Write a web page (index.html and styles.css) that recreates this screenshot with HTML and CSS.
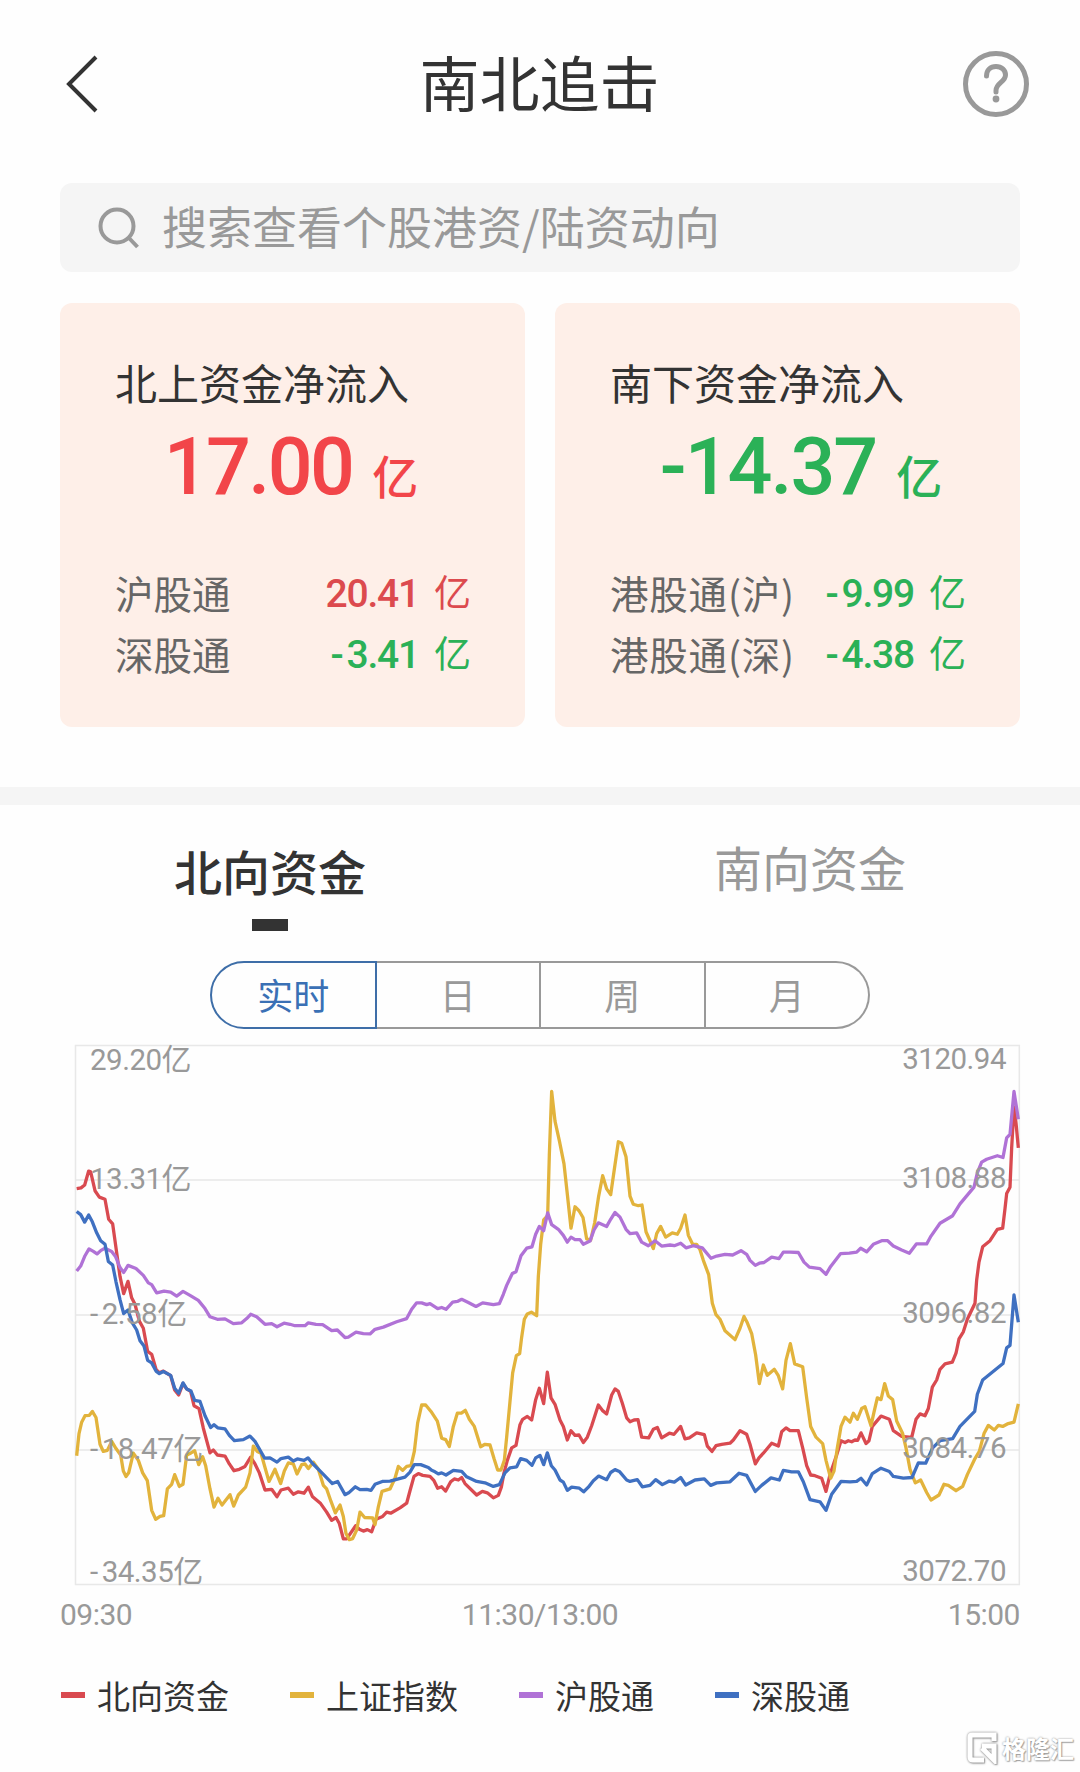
FILE: index.html
```html
<!DOCTYPE html>
<html lang="zh-CN">
  <head>
    <meta charset="UTF-8" />
    <meta name="viewport" content="width=device-width, initial-scale=1.0" />
    <title>南北追击</title>
    <link rel="stylesheet" href="styles.css">
  </head>
  <body>
    <header class="header">
      <svg class="back-icon" width="32" height="58" viewBox="0 0 32 58">
        <path d="M30 2 L3 29 L30 56" />
      </svg>
      <h1 class="title">南北追击</h1>
      <svg class="help-icon" width="66" height="66" viewBox="0 0 66 66">
        <circle cx="33" cy="33" r="30.500" />
        <path d="M23.500 25 C23.500 19 27.500 15.500 33 15.500 C38.500 15.500 42.500 19 42.500 24 C42.500 31 33 32 33 39.500 V41" />
        <circle class="help-dot" cx="33" cy="48" r="3.400" />
      </svg>
    </header>

    <div class="search">
      <svg class="search-icon" width="42" height="42" viewBox="0 0 42 42">
        <circle cx="19" cy="19" r="16.500" />
        <path d="M31 31 L39.500 40" />
      </svg>
      <span>搜索查看个股港资/陆资动向</span>
    </div>

    <section class="cards">
      <div class="card">
        <h2 class="card-title">北上资金净流入</h2>
        <div class="amount red">17.00<span class="unit">亿</span></div>
        <div class="row"><span>沪股通</span><span class="value red">20.41<span class="unit">亿</span></span></div>
        <div class="row"><span>深股通</span><span class="value green"><span class="minus">-</span>3.41<span class="unit">亿</span></span></div>
      </div>
      <div class="card south">
        <h2 class="card-title">南下资金净流入</h2>
        <div class="amount green">-14.37<span class="unit">亿</span></div>
        <div class="row"><span class="label">港股通(沪)</span><span class="value green"><span class="minus">-</span>9.99<span class="unit">亿</span></span></div>
        <div class="row"><span class="label">港股通(深)</span><span class="value green"><span class="minus">-</span>4.38<span class="unit">亿</span></span></div>
      </div>
    </section>

    <div class="divider"></div>

    <nav class="tabs">
      <div class="tab active">北向资金</div>
      <div class="tab">南向资金</div>
    </nav>

    <div class="segments">
      <div class="segment active">实时</div>
      <div class="segment">日</div>
      <div class="segment">周</div>
      <div class="segment">月</div>
    </div>

    <div class="chart">
      <svg class="plot" viewBox="45 42 2835 1512" preserveAspectRatio="none">
        <path class="grid" d="M45 420 H2878 M45 798 H2878 M45 1176 H2878" />
        <path class="grid" d="M46.500 43.400 H2878 V1552.600 H46.500 Z" />
        <polyline class="line north" points="50,444 63,442 74,434 86,395 92,397 105,450 118,468 135,474 146,530 158,543 168,610 180,690 191,738 204,704 215,750 225,768 238,815 250,835 263,900 275,908 288,950 298,960 310,955 332,968 344,1008 356,1022 369,990 380,1005 392,1012 402,1052 417,1060 430,1115 450,1184 460,1176 472,1190 495,1193 508,1215 522,1234 538,1230 555,1222 572,1196 585,1215 598,1240 615,1288 635,1286 651,1307 663,1288 685,1283 700,1300 715,1293 732,1297 745,1280 757,1306 782,1326 800,1350 815,1373 828,1365 838,1382 850,1425 860,1425 887,1388 898,1398 910,1403 922,1399 935,1405 948,1370 968,1362 980,1350 992,1353 1020,1338 1040,1325 1050,1290 1062,1250 1075,1242 1088,1247 1110,1250 1122,1262 1133,1283 1145,1279 1157,1291 1172,1265 1183,1257 1195,1260 1205,1253 1215,1270 1250,1302 1267,1292 1282,1296 1300,1310 1315,1303 1324,1280 1332,1240 1342,1205 1355,1170 1368,1163 1380,1105 1388,1090 1402,1082 1415,1092 1427,1035 1438,1003 1451,1046 1462,958 1473,1030 1485,1048 1500,1092 1510,1110 1522,1148 1533,1122 1545,1135 1557,1134 1570,1155 1582,1140 1595,1108 1615,1050 1627,1065 1640,1075 1655,1022 1665,1005 1675,1012 1687,1045 1700,1086 1710,1097 1722,1092 1734,1091 1745,1140 1766,1142 1780,1118 1792,1113 1805,1142 1828,1129 1842,1132 1862,1110 1875,1145 1888,1142 1910,1128 1933,1133 1942,1165 1956,1180 1968,1164 1985,1160 2010,1157 2020,1148 2040,1122 2060,1132 2070,1160 2086,1215 2097,1198 2110,1185 2135,1157 2155,1165 2165,1125 2178,1114 2190,1122 2215,1122 2228,1170 2240,1220 2252,1246 2265,1248 2285,1255 2298,1292 2310,1245 2330,1190 2343,1150 2355,1155 2365,1150 2375,1153 2385,1148 2393,1149 2403,1128 2418,1158 2427,1150 2437,1110 2463,1081 2488,1090 2500,1122 2525,1138 2555,1141 2568,1090 2580,1075 2595,1080 2605,1060 2617,1000 2630,980 2640,950 2655,935 2677,930 2688,905 2697,865 2710,845 2722,810 2745,765 2750,700 2757,650 2768,607 2790,590 2812,558 2828,555 2835,500 2840,458 2850,440 2855,330 2862,215 2868,260 2875,330" />
        <polyline class="line index" points="50,1192 57,1130 65,1098 75,1080 88,1079 97,1068 108,1085 120,1160 130,1180 142,1177 155,1152 168,1172 182,1190 190,1235 198,1250 206,1240 220,1185 235,1205 248,1240 262,1262 275,1345 287,1370 300,1362 311,1360 322,1285 335,1272 344,1245 358,1278 369,1272 380,1190 392,1185 404,1178 416,1217 428,1195 437,1220 450,1285 462,1336 474,1311 486,1330 510,1301 521,1333 535,1302 557,1280 570,1240 580,1165 592,1180 603,1185 615,1225 627,1264 645,1230 662,1270 673,1235 685,1212 700,1215 711,1243 725,1217 735,1215 745,1228 760,1210 775,1230 790,1275 800,1285 813,1320 826,1352 840,1330 850,1362 858,1410 868,1427 878,1424 890,1400 900,1350 914,1365 938,1366 945,1385 955,1335 966,1292 990,1285 1005,1255 1015,1222 1028,1233 1040,1222 1053,1220 1063,1180 1073,1100 1085,1050 1097,1050 1113,1068 1132,1095 1145,1143 1157,1147 1168,1166 1180,1110 1192,1073 1204,1073 1216,1065 1228,1090 1243,1110 1262,1167 1275,1160 1290,1162 1302,1200 1313,1232 1323,1232 1333,1205 1340,1140 1350,1040 1358,960 1369,912 1379,906 1385,860 1393,810 1402,795 1414,790 1430,800 1435,690 1442,600 1451,532 1463,520 1468,350 1475,172 1485,255 1498,310 1512,375 1522,460 1533,555 1545,495 1557,506 1569,525 1580,585 1592,588 1604,540 1616,465 1628,408 1640,445 1652,461 1663,390 1675,313 1685,317 1698,355 1710,465 1720,488 1735,492 1746,490 1758,565 1770,590 1780,612 1790,570 1802,550 1817,580 1837,568 1852,572 1862,555 1875,518 1885,575 1898,600 1910,600 1920,615 1930,645 1946,685 1957,765 1968,797 1980,810 1995,842 2025,867 2040,835 2052,802 2062,820 2075,850 2087,910 2098,990 2110,938 2122,967 2143,950 2155,968 2168,1005 2178,925 2191,878 2204,935 2228,943 2240,1030 2252,1110 2268,1140 2288,1158 2298,1205 2312,1255 2322,1235 2332,1170 2343,1110 2355,1084 2370,1098 2380,1073 2392,1090 2405,1060 2415,1055 2433,1108 2442,1070 2452,1030 2463,1035 2474,990 2485,1025 2498,1035 2510,1095 2528,1130 2538,1170 2550,1230 2566,1268 2582,1260 2600,1295 2613,1316 2637,1302 2652,1272 2665,1275 2688,1290 2708,1278 2722,1245 2745,1200 2758,1180 2772,1130 2785,1107 2803,1120 2815,1107 2828,1110 2842,1103 2862,1098 2875,1047" />
        <polyline class="line shanghai" points="50,675 62,661 75,632 87,613 100,620 111,627 123,617 135,611 155,620 167,635 180,665 191,679 204,659 228,668 250,687 265,708 275,713 290,736 312,731 332,734 350,745 369,732 390,743 415,757 435,780 450,803 472,810 495,809 520,822 545,820 560,808 572,796 590,803 615,824 635,822 651,831 672,821 690,824 705,828 735,828 745,820 768,824 788,825 815,842 832,840 855,861 865,860 888,846 910,850 930,851 945,838 970,832 1010,817 1040,808 1055,782 1070,764 1085,764 1100,769 1110,766 1133,780 1145,777 1158,782 1178,762 1192,760 1205,754 1225,763 1248,774 1268,764 1300,769 1318,766 1330,740 1340,715 1357,682 1368,677 1383,632 1400,611 1416,607 1427,572 1438,550 1451,562 1463,512 1475,545 1495,558 1510,575 1522,594 1533,580 1545,587 1560,587 1570,600 1590,591 1602,560 1615,540 1640,550 1652,530 1665,511 1680,524 1698,558 1710,570 1730,568 1745,594 1765,604 1785,590 1805,605 1830,602 1843,604 1862,597 1878,610 1900,604 1927,610 1953,639 1970,633 1995,628 2018,630 2043,618 2060,628 2070,645 2086,659 2098,653 2112,651 2135,636 2157,640 2170,622 2190,622 2215,623 2232,650 2248,664 2280,668 2298,684 2312,662 2342,626 2368,625 2390,622 2402,611 2420,621 2440,600 2465,590 2483,590 2500,605 2525,616 2548,625 2569,599 2600,599 2613,577 2640,541 2678,520 2700,487 2742,440 2752,400 2765,370 2780,362 2812,352 2829,357 2840,302 2850,292 2862,172 2875,250" />
        <polyline class="line shenzhen" points="50,508 62,517 74,538 86,518 97,537 110,568 122,590 135,600 145,648 158,658 168,705 180,755 191,794 204,784 217,820 230,840 240,870 252,885 263,925 275,932 288,955 298,962 310,956 332,967 344,1003 356,1017 369,988 380,1005 393,1011 404,1037 420,1040 435,1080 452,1113 462,1105 473,1114 495,1117 508,1135 523,1150 550,1147 570,1137 585,1152 614,1199 630,1198 651,1210 663,1200 685,1196 700,1207 712,1201 732,1205 744,1198 757,1213 788,1242 817,1270 833,1264 855,1301 866,1296 886,1279 900,1287 920,1286 933,1289 945,1272 967,1264 990,1263 1035,1252 1050,1238 1063,1217 1082,1217 1105,1225 1115,1233 1125,1237 1135,1243 1145,1240 1158,1246 1180,1233 1205,1236 1220,1251 1250,1264 1275,1268 1300,1278 1318,1273 1335,1240 1350,1226 1370,1223 1382,1200 1400,1205 1416,1219 1427,1198 1440,1191 1451,1217 1462,1184 1474,1220 1485,1232 1500,1260 1510,1266 1522,1289 1535,1280 1558,1283 1571,1293 1585,1280 1600,1262 1616,1249 1640,1259 1652,1239 1665,1231 1678,1236 1700,1260 1710,1264 1732,1259 1747,1279 1770,1275 1787,1259 1807,1273 1828,1263 1843,1266 1862,1253 1877,1274 1905,1260 1933,1257 1952,1275 1970,1268 2010,1265 2037,1241 2060,1247 2086,1292 2105,1275 2133,1254 2158,1260 2170,1233 2195,1237 2215,1237 2230,1265 2250,1315 2280,1321 2298,1345 2315,1300 2343,1264 2370,1265 2390,1264 2403,1255 2420,1274 2437,1242 2463,1227 2488,1236 2500,1250 2530,1255 2556,1253 2575,1212 2597,1213 2618,1170 2640,1150 2678,1144 2700,1110 2744,1068 2752,1020 2768,980 2829,934 2840,890 2850,883 2862,742 2875,818" />
      </svg>
      <div class="scale scale-left">
        <span>29.20<i>亿</i></span>
        <span>13.31<i>亿</i></span>
        <span><span class="minus">-</span>2.58<i>亿</i></span>
        <span><span class="minus">-</span>18.47<i>亿</i></span>
        <span><span class="minus">-</span>34.35<i>亿</i></span>
      </div>
      <div class="scale scale-right">
        <span>3120.94</span>
        <span>3108.88</span>
        <span>3096.82</span>
        <span>3084.76</span>
        <span>3072.70</span>
      </div>
    </div>

    <div class="times">
      <span>09:30</span>
      <span>11:30/13:00</span>
      <span>15:00</span>
    </div>

    <div class="legend">
      <div class="legend-item north">北向资金</div>
      <div class="legend-item index">上证指数</div>
      <div class="legend-item shanghai">沪股通</div>
      <div class="legend-item shenzhen">深股通</div>
    </div>

    <div class="watermark">
      <svg width="30" height="32" viewBox="0 0 30 32">
        <path d="M27 9 V3 H5 Q3 3 3 5 V25 Q3 28 6 28 H17 M15 14 H27 V28 L15 16" />
      </svg>
      <span>格隆汇</span>
    </div>
  </body>
</html>
```
FILE: styles.css
```css
* {
  margin: 0;
  padding: 0;
  box-sizing: border-box;
}

body {
  position: relative;
  width: 1080px;
  height: 1772px;
  overflow: hidden;
  background-color: #fefefe;
  color: #333;
  font-family: "Noto Sans CJK SC", sans-serif;
}

.header {
  height: 183px;
  padding: 48px 51px 0 66px;
  display: flex;
  align-items: flex-start;
  justify-content: space-between;
}

.back-icon {
  margin-top: 7px;
  fill: none;
  stroke: #333;
  stroke-width: 4;
}

.title {
  margin-left: 18px;
  font-size: 60px;
  font-weight: 400;
  line-height: 66px;
}

.help-icon {
  margin-top: 3px;
  fill: none;
  stroke: #999;
  stroke-width: 5;
}

.help-icon path {
  stroke-linecap: round;
}

.help-icon .help-dot {
  fill: #999;
  stroke: none;
}

.search {
  height: 89px;
  margin: 0 60px;
  padding: 0 38px;
  display: flex;
  align-items: center;
  gap: 22px;
  border-radius: 12px;
  background-color: #f5f5f5;
  color: #999;
  font-size: 45px;
  line-height: 60px;
}

.search span {
  padding-bottom: 3px;
}

.search-icon {
  fill: none;
  stroke: #999;
  stroke-width: 4;
}

.cards {
  margin: 31px 60px 0;
  display: grid;
  grid-template-columns: 1fr 1fr;
  gap: 30px;
}

.card {
  height: 424px;
  padding: 51px 54px 0 55px;
  border-radius: 12px;
  background-color: #feefe8;
}

.card-title {
  font-size: 42px;
  font-weight: 400;
  line-height: 56px;
}

.amount {
  height: 120px;
  margin-bottom: 32px;
  padding: 3px 4px 0 0;
  font-family: Roboto, sans-serif;
  font-size: 79px;
  font-weight: 500;
  line-height: 108px;
  letter-spacing: -2.6px;
  text-align: center;
}

.south .amount {
  padding: 3px 0 0 26px;
  letter-spacing: -2px;
}

.unit {
  font-family: "Noto Sans CJK SC", sans-serif;
  letter-spacing: 0;
}

.amount .unit {
  margin-left: 20px;
  font-size: 46px;
}

.row {
  height: 61px;
  display: flex;
  align-items: center;
  justify-content: space-between;
  color: #666;
  font-size: 38.5px;
  line-height: 61px;
  white-space: nowrap;
}

.label {
  letter-spacing: 0.8px;
}

.value {
  font-family: Roboto, sans-serif;
  font-size: 39px;
  font-weight: 500;
  letter-spacing: -1.2px;
}

.minus {
  margin-right: 4px;
}

.value .unit {
  margin-left: 15px;
  font-size: 37px;
  font-weight: 400;
}

.red {
  color: #f24549;
}

.row .red {
  color: #dc4a4e;
}

.green {
  color: #2bb157;
}

.divider {
  height: 18px;
  margin-top: 60px;
  background-color: #f5f5f5;
}

.tabs {
  height: 156px;
  display: flex;
}

.tab {
  flex: 1;
  padding-top: 31px;
  color: #999;
  font-size: 48px;
  line-height: 60px;
  text-align: center;
}

.tab.active {
  padding-top: 35px;
  color: #333;
  font-weight: 500;
}

.tab.active::after {
  content: "";
  display: block;
  width: 36px;
  height: 12px;
  margin: 19px auto 0;
  background-color: #333;
}

.segments {
  width: 660px;
  height: 68px;
  margin: 0 auto;
  display: flex;
}

.segment {
  flex: 1;
  border: 2px solid #999;
  border-left: 0;
  color: #999;
  font-size: 36px;
  line-height: 62px;
  text-align: center;
}

.segment.active {
  border: 2px solid #3e6ea8;
  border-radius: 34px 0 0 34px;
  color: #3a70b5;
}

.segment:last-child {
  border-radius: 0 34px 34px 0;
}

.chart {
  position: relative;
  width: 945px;
  height: 540px;
  margin: 16px 0 0 75px;
}

.plot {
  display: block;
  width: 945px;
  height: 540px;
  overflow: visible;
}

.plot * {
  fill: none;
  vector-effect: non-scaling-stroke;
}

.grid {
  stroke: #e8e8e8;
  stroke-width: 1.5;
}

.line {
  stroke: currentColor;
  stroke-width: 3.3;
  stroke-linejoin: round;
}

.north {
  color: #d94a50;
}

.index {
  color: #e2b33c;
}

.shanghai {
  color: #b072d6;
}

.shenzhen {
  color: #3f70c1;
}

/* axis values lie over the plot */
.scale {
  position: absolute;
  top: 0;
  display: grid;
  grid-template-rows: 119px 135px 135px 123px 28px;
  color: #999;
  font-family: Roboto, sans-serif;
  font-size: 29.5px;
  line-height: 28px;
  letter-spacing: -0.5px;
}

.scale-left {
  top: -2px;
  left: 15px;
}

.scale-right {
  right: 14px;
  text-align: right;
}

.scale i {
  font-family: "Noto Sans CJK SC", sans-serif;
  font-size: 30px;
  font-style: normal;
}

.times {
  margin: 14px 60px 0;
  display: flex;
  justify-content: space-between;
  color: #999;
  font-family: Roboto, sans-serif;
  font-size: 30px;
  line-height: 32px;
  letter-spacing: -0.5px;
}

.legend {
  margin: 41px 0 0 61px;
  display: flex;
  gap: 61px;
}

.legend-item {
  display: flex;
  align-items: center;
  gap: 12px;
  font-size: 33px;
  line-height: 46px;
  -webkit-text-fill-color: #333;
}

.legend-item::before {
  content: "";
  width: 24px;
  height: 6px;
  background-color: currentColor;
}

.watermark {
  position: absolute;
  right: 6px;
  bottom: 7px;
  display: flex;
  align-items: center;
  gap: 5px;
  color: #fff;
  font-size: 24px;
  font-weight: 700;
  line-height: 34px;
  text-shadow: 0 0 2px #888, 1px 1px 1px #aaa;
}

.watermark svg {
  fill: none;
  stroke: #fff;
  stroke-width: 5;
  filter: drop-shadow(0 0 1px #888) drop-shadow(1px 1px 0 #bbb);
}
```
